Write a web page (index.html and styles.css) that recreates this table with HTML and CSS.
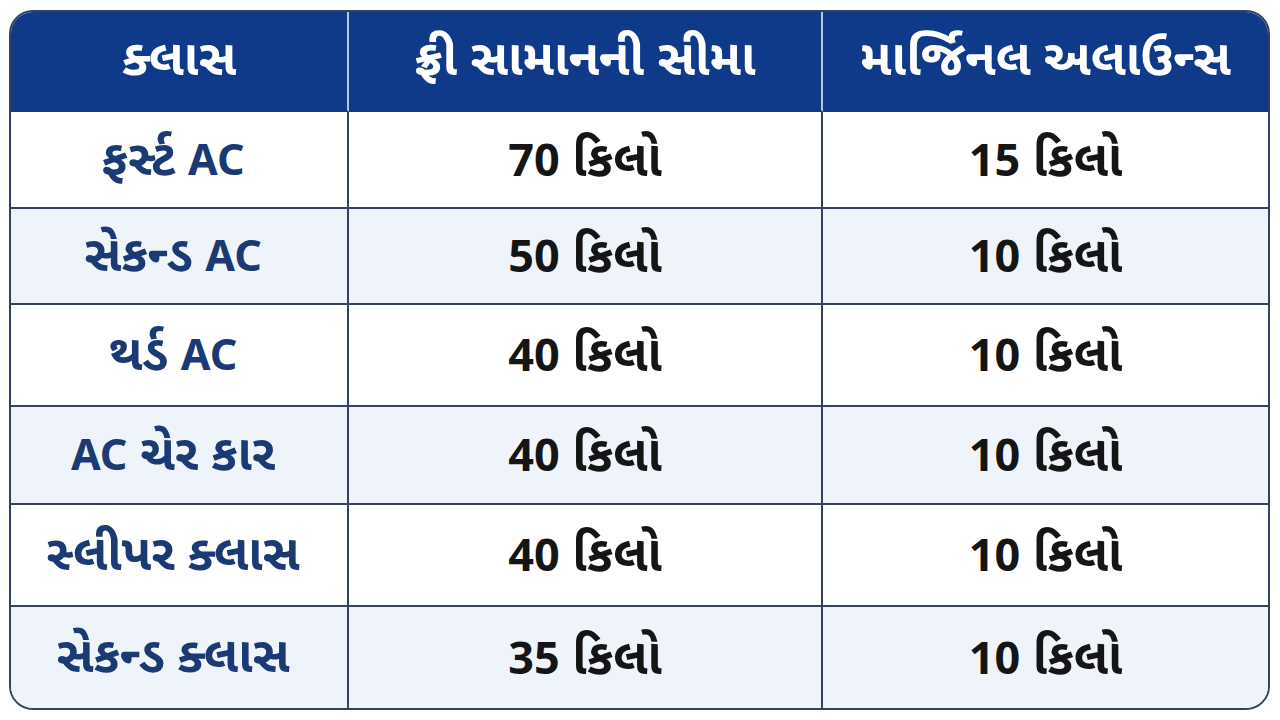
FILE: index.html
```html
<!DOCTYPE html>
<html lang="gu">
<head>
<meta charset="utf-8">
<title>સામાન મર્યાદા</title>
<link rel="stylesheet" href="styles.css">
</head>
<body>
<div class="table">
  <div class="cell head"><span class="t">ક્લાસ</span></div>
  <div class="cell head"><span class="t">ફ્રી સામાનની સીમા</span></div>
  <div class="cell head last"><span class="t">માર્જિનલ અલાઉન્સ</span></div>

  <div class="cell cls"><span class="t">ફર્સ્ટ <span class="lat">AC</span></span></div>
  <div class="cell val"><span class="t"><span class="lat">70</span> કિલો</span></div>
  <div class="cell val last"><span class="t"><span class="lat">15</span> કિલો</span></div>

  <div class="cell cls alt"><span class="t">સેકન્ડ <span class="lat">AC</span></span></div>
  <div class="cell val alt"><span class="t"><span class="lat">50</span> કિલો</span></div>
  <div class="cell val alt last"><span class="t"><span class="lat">10</span> કિલો</span></div>

  <div class="cell cls"><span class="t">થર્ડ <span class="lat">AC</span></span></div>
  <div class="cell val"><span class="t"><span class="lat">40</span> કિલો</span></div>
  <div class="cell val last"><span class="t"><span class="lat">10</span> કિલો</span></div>

  <div class="cell cls alt"><span class="t"><span class="lat">AC</span> ચેર કાર</span></div>
  <div class="cell val alt"><span class="t"><span class="lat">40</span> કિલો</span></div>
  <div class="cell val alt last"><span class="t"><span class="lat">10</span> કિલો</span></div>

  <div class="cell cls"><span class="t">સ્લીપર ક્લાસ</span></div>
  <div class="cell val"><span class="t"><span class="lat">40</span> કિલો</span></div>
  <div class="cell val last"><span class="t"><span class="lat">10</span> કિલો</span></div>

  <div class="cell cls alt bottom"><span class="t">સેકન્ડ ક્લાસ</span></div>
  <div class="cell val alt bottom"><span class="t"><span class="lat">35</span> કિલો</span></div>
  <div class="cell val alt bottom last"><span class="t"><span class="lat">10</span> કિલો</span></div>
</div>
</body>
</html>
```

FILE: styles.css
```css
html, body {
  margin: 0;
  padding: 0;
  background: #ffffff;
}
body {
  padding: 10px 9px 0 9px;
  font-family: "Noto Sans Gujarati", "Noto Sans", "Open Sans", sans-serif;
}
.table {
  display: grid;
  grid-template-columns: 338px 474px 1fr;
  grid-template-rows: 100px 97px 96px 102px 98px 102px 101px;
  width: 1261px;
  border: 2px solid #34425f;
  border-radius: 24px;
  overflow: hidden;
  box-sizing: border-box;
}
.cell {
  display: flex;
  align-items: center;
  justify-content: center;
  border-right: 2px solid #34425f;
  border-bottom: 2px solid #34425f;
  background: #ffffff;
  font-weight: 700;
  white-space: nowrap;
}
.t {
  display: block;
  line-height: 1.2;
}
.cell.last {
  border-right: none;
}
.cell.bottom {
  border-bottom: none;
}
.head {
  background: #0f3a8a;
  color: #ffffff;
  font-size: 50px;
  border-right-color: #b9c4d8;
  border-bottom-color: #0f3a8a;
}
.head .t {
  padding-top: 4px;
}
.alt {
  background: #eff4fb;
}
.cls {
  color: #1b3a74;
  font-size: 49px;
  padding-right: 12px;
}
.cls .lat {
  font-size: 43px;
}
.val {
  color: #151515;
  font-size: 49px;
}
.val .lat {
  font-size: 45px;
}
.lat {
  font-family: "Noto Sans", "Open Sans", sans-serif;
}
.cls .t, .val .t {
  padding-top: 6px;
}
```
